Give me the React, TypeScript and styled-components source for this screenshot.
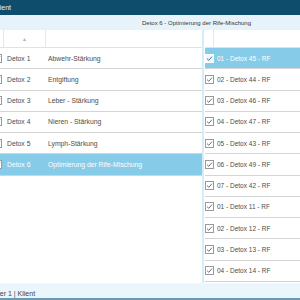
import React from "react";
import styled, { createGlobalStyle } from "styled-components";

const Global = createGlobalStyle`
  html, body { margin: 0; padding: 0; background: #ffffff; }
  body { width: 300px; height: 300px; overflow: hidden; font-family: "Liberation Sans", Arial, sans-serif; }
`;

const Window = styled.div`
  width: 330px;
  height: 300px;
  margin-left: -30px;
  display: flex;
  flex-direction: column;
  background: #fff;
  font-size: 6.8px;
  color: #4d4d4d;
`;

const TitleBar = styled.div`
  height: 15px;
  flex: none;
  background: #0e4e6c;
  color: #e8f1f5;
  font-size: 7px;
  display: flex;
  align-items: center;
  padding-left: 23.5px;
`;

const Caption = styled.div`
  height: 15px;
  flex: none;
  background: #e7f3fb;
  display: flex;
  align-items: center;
  padding-left: 172px;
  font-size: 6px;
  color: #333;
`;

const Body = styled.div`
  flex: 1;
  display: flex;
  min-height: 0;
`;

const LeftPanel = styled.div`
  width: 232px;
  flex: none;
  border-right: 2px solid #d6ecf7;
  display: flex;
  flex-direction: column;
`;

const RightPanel = styled.div`
  flex: 1;
  margin-left: 1px;
  display: flex;
  flex-direction: column;
`;

const LeftGrid = styled.div<{ $sel?: boolean; $head?: boolean }>`
  display: grid;
  grid-template-columns: 34px 42px 1fr;
  height: ${(p) => (p.$head ? "18px" : "21.25px")};
  box-sizing: border-box;
  border-bottom: 1px solid ${(p) => (p.$head ? "#e2e2e2" : "#d4d4d4")};
  background: ${(p) => (p.$sel ? "#86cbe8" : "transparent")};
  color: ${(p) => (p.$sel ? "#ffffff" : "#4d4d4d")};
  align-items: center;
`;

const HeadCell = styled.div<{ $last?: boolean }>`
  height: 100%;
  border-right: ${(p) => (p.$last ? "none" : "1px solid #e6e6e6")};
  display: flex;
  align-items: center;
  justify-content: center;
  color: #b0b0b0;
  font-size: 5px;
`;

const CheckCell = styled.div`
  display: flex;
  justify-content: flex-end;
  padding-right: 2px;
`;

const NameCell = styled.div`
  padding-left: 3px;
  white-space: nowrap;
`;

const DescCell = styled.div`
  padding-left: 2px;
  white-space: nowrap;
`;

const RightHead = styled.div`
  height: 18px;
  box-sizing: border-box;
  border-bottom: 1px solid #e2e2e2;
  display: grid;
  grid-template-columns: 8px 1fr;
`;

const RightHeadCell = styled.div`
  border-left: 1px solid #e6e6e6;
  height: 100%;
`;

const RightRow = styled.div<{ $sel?: boolean }>`
  height: 21.25px;
  box-sizing: border-box;
  border-bottom: 1px solid #d4d4d4;
  background: ${(p) => (p.$sel ? "#86cbe8" : "transparent")};
  color: ${(p) => (p.$sel ? "#ffffff" : "#4d4d4d")};
  display: flex;
  align-items: center;
  gap: 3px;
  font-size: 6.5px;
  white-space: nowrap;
`;

const StatusBar = styled.div`
  height: 17px;
  flex: none;
  box-sizing: border-box;
  background: #eaf5fc;
  border-top: 1px solid #f4f9fc;
  border-bottom: 2px solid #6a9ab3;
  display: flex;
  align-items: flex-end;
  padding: 0 0 1px 8px;
  font-size: 7px;
  color: #444;
`;

const Check: React.FC<{ sel?: boolean }> = ({ sel }) => (
  <svg width="9" height="9" viewBox="0 0 9 9">
    <rect x="0.5" y="0.5" width="8" height="8" fill={sel ? "#eef7fb" : "#fff"} stroke={sel ? "#ffffff" : "#9a9a9a"} strokeWidth="1" />
    <path d="M2 4.6 L3.8 6.3 L7 2.6" fill="none" stroke={sel ? "#4a7890" : "#707070"} strokeWidth="1" />
  </svg>
);

const leftRows = [
  ["Detox 1", "Abwehr-Stärkung"],
  ["Detox 2", "Entgiftung"],
  ["Detox 3", "Leber - Stärkung"],
  ["Detox 4", "Nieren - Stärkung"],
  ["Detox 5", "Lymph-Stärkung"],
  ["Detox 6", "Optimierung der Rife-Mischung"],
];

const rightRows = [
  "01 - Detox 45 - RF",
  "02 - Detox 44 - RF",
  "03 - Detox 46 - RF",
  "04 - Detox 47 - RF",
  "05 - Detox 43 - RF",
  "06 - Detox 49 - RF",
  "07 - Detox 42 - RF",
  "01 - Detox 11 - RF",
  "02 - Detox 12 - RF",
  "03 - Detox 13 - RF",
  "04 - Detox 14 - RF",
];

export default function App() {
  return (
    <>
      <Global />
      <Window>
        <TitleBar>Klient</TitleBar>
        <Caption>Detox 6 - Optimierung der Rife-Mischung</Caption>
        <Body>
          <LeftPanel>
            <LeftGrid $head>
              <HeadCell />
              <HeadCell>▲</HeadCell>
              <HeadCell $last />
            </LeftGrid>
            {leftRows.map(([n, d], i) => (
              <LeftGrid key={n} $sel={i === 5}>
                <CheckCell>
                  <Check />
                </CheckCell>
                <NameCell>{n}</NameCell>
                <DescCell>{d}</DescCell>
              </LeftGrid>
            ))}
          </LeftPanel>
          <RightPanel>
            <RightHead>
              <div />
              <RightHeadCell />
            </RightHead>
            {rightRows.map((r, i) => (
              <RightRow key={r + i} $sel={i === 0}>
                <Check sel={i === 0} />
                {r}
              </RightRow>
            ))}
          </RightPanel>
        </Body>
        <StatusBar>Benutzer 1 | Klient</StatusBar>
      </Window>
    </>
  );
}
